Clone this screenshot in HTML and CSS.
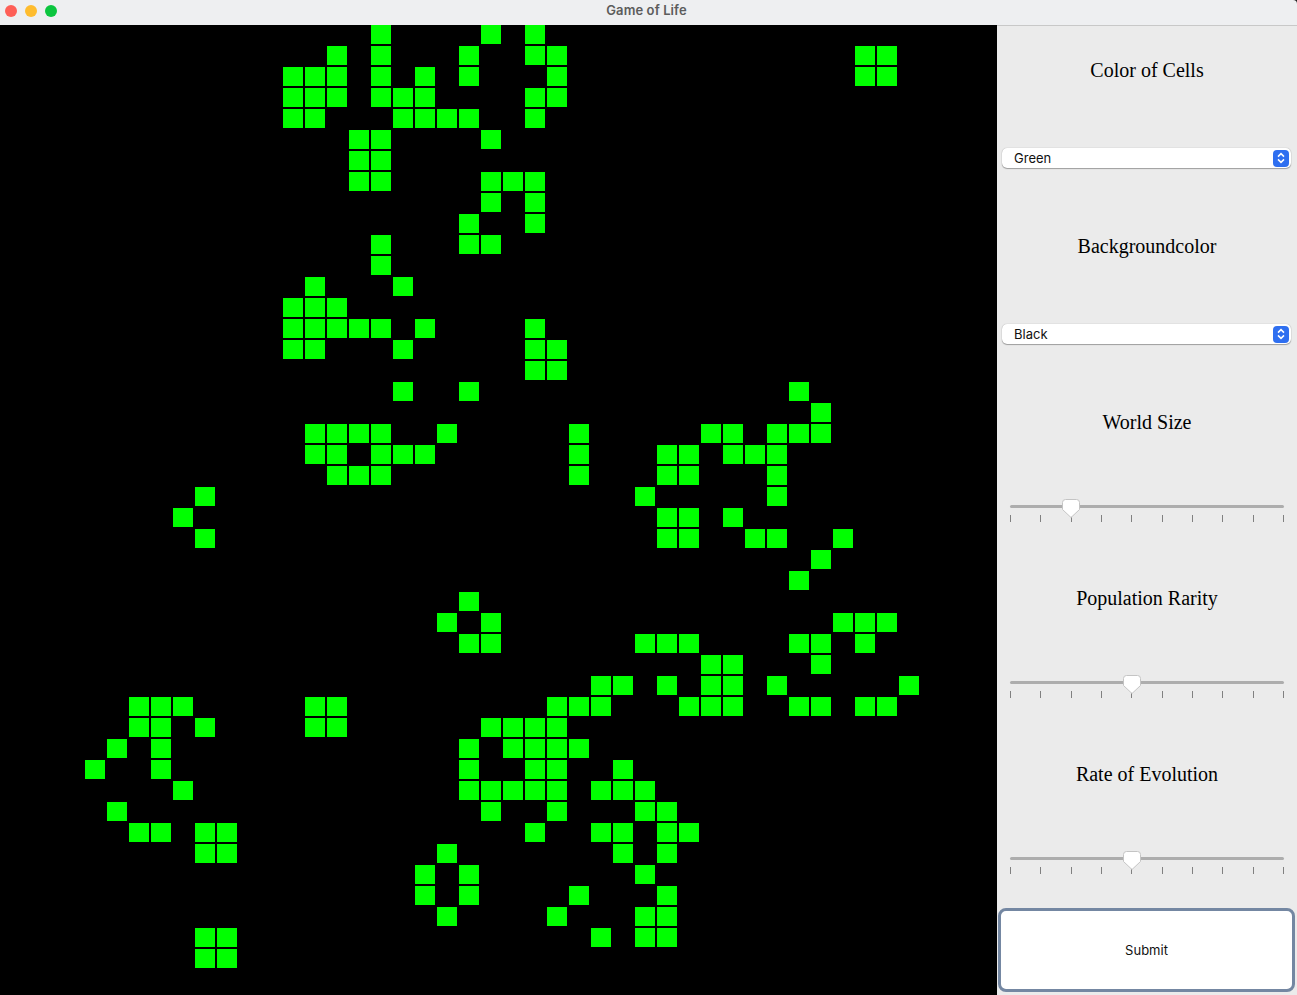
FILE: index.html
```html
<!DOCTYPE html>
<html lang="en">
  <head>
    <meta charset="UTF-8" />
    <title>Game of Life</title>
    <link rel="stylesheet" href="styles.css">
  </head>
  <body>
    <div class="titlebar">
      <div class="traffic">
        <span class="light red"></span>
        <span class="light yellow"></span>
        <span class="light green"></span>
      </div>
      <div class="title">Game of Life</div>
    </div>
    <div class="window">
      <div class="world" id="world"></div>
      <div class="controls">
        <div class="row"><label class="caption">Color of Cells</label></div>
        <div class="row">
          <div class="select">
            <span>Green</span>
            <span class="stepper">
              <svg width="12" height="14" viewBox="0 0 12 14"><path d="M3 5.6 6 2.6l3 3M3 8.4l3 3 3-3" /></svg>
            </span>
          </div>
        </div>
        <div class="row"><label class="caption">Backgroundcolor</label></div>
        <div class="row">
          <div class="select">
            <span>Black</span>
            <span class="stepper">
              <svg width="12" height="14" viewBox="0 0 12 14"><path d="M3 5.6 6 2.6l3 3M3 8.4l3 3 3-3" /></svg>
            </span>
          </div>
        </div>
        <div class="row"><label class="caption">World Size</label></div>
        <div class="row">
          <div class="slider" data-value="2"></div>
        </div>
        <div class="row"><label class="caption">Population Rarity</label></div>
        <div class="row">
          <div class="slider" data-value="4"></div>
        </div>
        <div class="row"><label class="caption">Rate of Evolution</label></div>
        <div class="row">
          <div class="slider" data-value="4"></div>
        </div>
        <div class="row">
          <button class="submit">Submit</button>
        </div>
      </div>
    </div>
    <script src="game.js"></script>
  </body>
</html>
```

FILE: styles.css
```css
/* Basic styles */
html,
body {
  margin: 0;
  height: 100%;
  overflow: hidden;
  background-color: #222;
}

body {
  font-family: "Inter", "Open Sans", sans-serif;
}

.titlebar {
  position: relative;
  height: 25px;
  background-color: #eeeff1;
  border-top-right-radius: 4px;
  display: flex;
  justify-content: center;
  align-items: center;
}

.traffic {
  position: absolute;
  left: 5px;
  top: 5px;
  display: flex;
  gap: 8px;
}

.light {
  width: 12px;
  height: 12px;
  border-radius: 50%;
}

.red {
  background-color: #fe5f57;
}

.yellow {
  background-color: #febc2e;
}

.green {
  background-color: #0bc53f;
}

.title {
  font-size: 13px;
  font-weight: 600;
  letter-spacing: 0.1px;
  color: #5c5c5c;
  margin: 0 4px 5px 0;
}

.window {
  display: flex;
  height: 970px;
}

.world {
  width: 997px;
  height: 970px;
  box-sizing: border-box;
  padding-left: 19px;
  flex-shrink: 0;
  overflow: hidden;
  background-color: #000;
  display: grid;
  grid-template-columns: repeat(44, 20px);
  grid-template-rows: repeat(46, 19px);
  gap: 2px;
}

.cell.alive {
  background-color: #00ff00;
}

.controls {
  flex: 1;
  background-color: #ebebeb;
  border-top: 1px solid #c8c8c8;
  display: grid;
  grid-template-rows: repeat(11, 88px);
}

.row {
  display: flex;
  align-items: center;
  justify-content: center;
  padding: 0 2px;
}

.caption {
  font-family: "Liberation Serif", serif;
  font-size: 20px;
  color: #000;
}

.select {
  flex: 1;
  height: 20px;
  margin: 0 4px 0 3px;
  box-sizing: border-box;
  background-color: #fff;
  border-radius: 5px;
  box-shadow: 0 0 1px rgba(0, 0, 0, 0.35), 0 1px 1px rgba(0, 0, 0, 0.3);
  display: flex;
  align-items: center;
  justify-content: space-between;
  padding: 0 2px 0 12px;
  font-size: 13px;
  color: #111;
}

.stepper {
  width: 16px;
  height: 17px;
  border-radius: 4px;
  background-color: #2f6ff0;
  display: flex;
  align-items: center;
  justify-content: center;
}

.stepper svg {
  fill: none;
  stroke: #fff;
  stroke-width: 1.5;
}

.slider {
  position: relative;
  flex: 1;
  margin: 0 11px;
  height: 22px;
}

.track {
  height: 3px;
  margin-top: 6px;
  border-radius: 2px;
  background-color: #adadad;
}

.thumb {
  position: absolute;
  top: 0;
  width: 18px;
  height: 19px;
  margin-left: -9px;
}

.thumb path {
  fill: #fff;
  stroke: #c4c4c4;
  stroke-width: 1;
}

.ticks {
  display: flex;
  justify-content: space-between;
  margin-top: 7px;
}

.tick {
  width: 1px;
  height: 7px;
  background-color: #808080;
}

.submit {
  flex: 1;
  height: 84px;
  margin-left: -1px;
  box-sizing: border-box;
  background-color: #fff;
  border: 3px solid #7487a2;
  border-radius: 8px;
  font-family: inherit;
  font-size: 13px;
  color: #111;
}
```

FILE: game.js
```js
// Live cells per row, as column numbers
const liveCells = [
  [17, 22, 24],
  [15, 17, 21, 24, 25, 39, 40],
  [13, 14, 15, 17, 19, 21, 25, 39, 40],
  [13, 14, 15, 17, 18, 19, 24, 25],
  [13, 14, 18, 19, 20, 21, 24],
  [16, 17, 22],
  [16, 17],
  [16, 17, 22, 23, 24],
  [22, 24],
  [21, 24],
  [17, 21, 22],
  [17],
  [14, 18],
  [13, 14, 15],
  [13, 14, 15, 16, 17, 19, 24],
  [13, 14, 18, 24, 25],
  [24, 25],
  [18, 21, 36],
  [37],
  [14, 15, 16, 17, 20, 26, 32, 33, 35, 36, 37],
  [14, 15, 17, 18, 19, 26, 30, 31, 33, 34, 35],
  [15, 16, 17, 26, 30, 31, 35],
  [9, 29, 35],
  [8, 30, 31, 33],
  [9, 30, 31, 34, 35, 38],
  [37],
  [36],
  [21],
  [20, 22, 38, 39, 40],
  [21, 22, 29, 30, 31, 36, 37, 39],
  [32, 33, 37],
  [27, 28, 30, 32, 33, 35, 41],
  [6, 7, 8, 14, 15, 25, 26, 27, 31, 32, 33, 36, 37, 39, 40],
  [6, 7, 9, 14, 15, 22, 23, 24, 25],
  [5, 7, 21, 23, 24, 25, 26],
  [4, 7, 21, 24, 25, 28],
  [8, 21, 22, 23, 24, 25, 27, 28, 29],
  [5, 22, 25, 29, 30],
  [6, 7, 9, 10, 24, 27, 28, 30, 31],
  [9, 10, 20, 28, 30],
  [19, 21, 29],
  [19, 21, 26, 30],
  [20, 25, 29, 30],
  [9, 10, 27, 29, 30],
  [9, 10],
];

const world = document.getElementById("world");

for (let r = 0; r < 46; r++) {
  const alive = liveCells[r] || [];
  for (let c = 1; c <= 44; c++) {
    const cell = document.createElement("div");
    cell.className = alive.includes(c) ? "cell alive" : "cell";
    world.appendChild(cell);
  }
}

document.querySelectorAll(".slider").forEach((slider) => {
  const percent = (slider.dataset.value / 9) * 100;
  let ticks = "";
  for (let i = 0; i < 10; i++) {
    ticks += '<span class="tick"></span>';
  }
  slider.innerHTML =
    '<div class="track"></div>' +
    `<svg class="thumb" style="left: ${percent}%" viewBox="0 0 18 19"><path d="M3.5 .5h11a3 3 0 0 1 3 3v7L9 18.5 .5 10.5v-7a3 3 0 0 1 3-3z" /></svg>` +
    `<div class="ticks">${ticks}</div>`;
});
```
